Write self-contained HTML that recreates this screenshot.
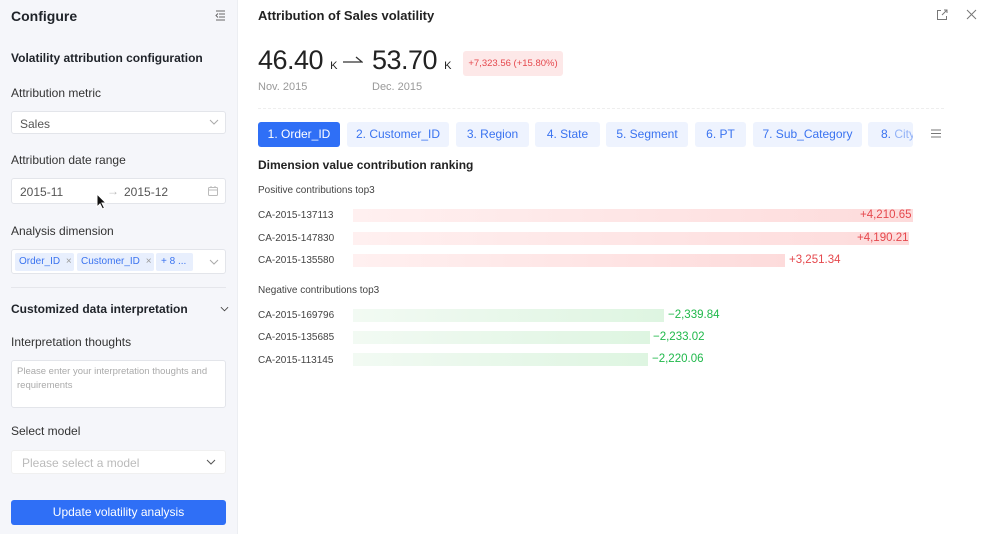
<!DOCTYPE html>
<html><head><meta charset="utf-8"><style>
*{box-sizing:border-box;margin:0;padding:0}
body{width:986px;height:534px;overflow:hidden;font-family:"Liberation Sans",Arial,sans-serif;background:#fff;position:relative;color:#1f2329}
.abs{position:absolute}
.side{left:0;top:0;width:238px;height:534px;background:#f5f6fa;border-right:1px solid #eceef2}
.lbl{font-size:12px;color:#333;position:absolute;left:11px}
.inp{position:absolute;left:11px;width:215px;background:#fff;border:1px solid #e3e5ea;border-radius:3px;font-size:12px;color:#555}
.tab{position:absolute;top:122px;height:25px;background:#eef3fe;color:#3a73f0;font-size:12px;border-radius:3px;text-align:center;line-height:25px;white-space:nowrap}
.row{position:absolute;left:258px;font-size:10px;color:#444}
.bar{position:absolute;left:353px;height:13px}
.pos{background:linear-gradient(90deg,#fff0f0,#fddbdb)}
.neg{background:linear-gradient(90deg,#f2faf3,#def5e1)}
.val{position:absolute;font-size:11.5px}
.chev{position:absolute}
</style></head><body>
<div class="abs side"></div>
<div class="abs" style="left:11px;top:8px;font-size:14px;font-weight:bold">Configure</div>
<svg class="abs" style="left:214px;top:9px" width="12" height="12" viewBox="0 0 12 12" fill="none" stroke="#666" stroke-width="1"><path d="M2 2h9M5 5h6M5 8h6M2 11h9M4 4.5L2 6.5 4 8.5"/></svg>
<div class="abs" style="left:11px;top:51px;font-size:12px;font-weight:bold">Volatility attribution configuration</div>
<div class="lbl" style="top:86px">Attribution metric</div>
<div class="inp" style="top:111px;height:23px;padding:5px 8px">Sales<svg class="chev" style="right:6px;top:7px" width="10" height="6" viewBox="0 0 10 6" fill="none" stroke="#aaa"><path d="M1 1l4 4 4-4"/></svg></div>
<div class="lbl" style="top:153px">Attribution date range</div>
<div class="inp" style="top:178px;height:26px;padding:6px 8px">2015-11<span class="abs" style="left:95px;top:5px;color:#bbb">→</span><span class="abs" style="left:112px;top:6px">2015-12</span><svg class="chev" style="right:7px;top:7px" width="10" height="10" viewBox="0 0 10 10" fill="none" stroke="#bbb"><rect x="0.5" y="1.5" width="9" height="8" rx="1"/><path d="M0.5 4h9M3 0v2M7 0v2"/></svg></div>
<svg class="abs" style="left:96px;top:193px" width="12" height="18" viewBox="0 0 12 18"><path d="M1 1v13l3-3 2.5 5 2-1-2.5-5h4z" fill="#111" stroke="#fff" stroke-width="1"/></svg>
<div class="lbl" style="top:224px">Analysis dimension</div>
<div class="inp" style="top:249px;height:25px">
<span class="abs" style="left:3px;top:3px;height:18px;width:59px;background:#e8effd;color:#3a73f0;font-size:10px;line-height:18px;padding-left:4px;border-radius:2px">Order_ID <span style="color:#999;margin-left:3px">×</span></span>
<span class="abs" style="left:65px;top:3px;height:18px;width:77px;background:#e8effd;color:#3a73f0;font-size:10px;line-height:18px;padding-left:4px;border-radius:2px">Customer_ID <span style="color:#999;margin-left:3px">×</span></span>
<span class="abs" style="left:144px;top:3px;height:18px;width:37px;background:#e8effd;color:#3a73f0;font-size:10px;line-height:18px;padding-left:5px;border-radius:2px">+ 8 ...</span>
<svg class="chev" style="right:6px;top:9px" width="10" height="6" viewBox="0 0 10 6" fill="none" stroke="#aaa"><path d="M1 1l4 4 4-4"/></svg></div>
<div class="abs" style="left:11px;top:287px;width:215px;border-top:1px solid #e5e6eb"></div>
<div class="abs" style="left:11px;top:302px;font-size:12px;font-weight:bold">Customized data interpretation</div>
<svg class="abs" style="left:220px;top:306px" width="9" height="6" viewBox="0 0 10 6" fill="none" stroke="#444"><path d="M1 1l4 4 4-4"/></svg>
<div class="lbl" style="top:335px">Interpretation thoughts</div>
<div class="inp" style="top:360px;height:48px;padding:4px 5px;font-size:9.5px;color:#aaa;line-height:14px">Please enter your interpretation thoughts and requirements</div>
<div class="lbl" style="top:424px">Select model</div>
<div class="inp" style="top:450px;height:24px;padding:5px 10px;color:#bbb;border-color:#f0f0f0">Please select a model<svg class="chev" style="right:9px;top:8px" width="10" height="6" viewBox="0 0 10 6" fill="none" stroke="#555"><path d="M1 1l4 4 4-4"/></svg></div>
<div class="abs" style="left:11px;top:500px;width:215px;height:25px;background:#2f6ff6;border-radius:3px;color:#fff;font-size:12px;text-align:center;line-height:25px">Update volatility analysis</div>

<div class="abs" style="left:258px;top:8px;font-size:13px;font-weight:bold;color:#222">Attribution of Sales volatility</div>
<svg class="abs" style="left:936px;top:9px" width="12" height="12" viewBox="0 0 12 12" fill="none" stroke="#777" stroke-width="1"><path d="M5 1.5H1.5v9h9V7M6 6l5-5M8 1h3v3"/></svg>
<svg class="abs" style="left:966px;top:9px" width="11" height="11" viewBox="0 0 11 11" stroke="#777" stroke-width="1"><path d="M1 1l9 9M10 1l-9 9"/></svg>
<div class="abs" style="left:258px;top:45px;font-size:27px;color:#222;letter-spacing:-0.5px">46.40<span style="font-size:11px;margin-left:7px">K</span></div>
<svg class="abs" style="left:343px;top:56px" width="20" height="8" viewBox="0 0 20 8" fill="none" stroke="#333" stroke-width="1.3"><path d="M0 6h19L13 1"/></svg>
<div class="abs" style="left:372px;top:45px;font-size:27px;color:#222;letter-spacing:-0.5px">53.70<span style="font-size:11px;margin-left:7px">K</span></div>
<div class="abs" style="left:258px;top:81px;font-size:11px;color:#999">Nov. 2015</div>
<div class="abs" style="left:372px;top:81px;font-size:11px;color:#999">Dec. 2015</div>
<div class="abs" style="left:463px;top:51px;width:100px;height:25px;background:#fde8e8;border-radius:3px;color:#e5484d;font-size:9.5px;text-align:center;line-height:25px">+7,323.56 (+15.80%)</div>
<div class="abs" style="left:258px;top:108px;width:686px;border-top:1px dashed #eee"></div>
<div class="tab" style="left:258px;width:82px;background:#2f6ff6;color:#fff">1. Order_ID</div>
<div class="tab" style="left:347px;width:102px">2. Customer_ID</div>
<div class="tab" style="left:456px;width:73px">3. Region</div>
<div class="tab" style="left:535px;width:65px">4. State</div>
<div class="tab" style="left:606px;width:82px">5. Segment</div>
<div class="tab" style="left:695px;width:51px">6. PT</div>
<div class="tab" style="left:753px;width:109px">7. Sub_Category</div>
<div class="tab" style="left:868px;width:45px;text-align:left;padding-left:13px;overflow:hidden">8. <span style="opacity:.5">City</span></div>
<svg class="abs" style="left:931px;top:129px" width="10" height="9" viewBox="0 0 10 9" stroke="#777"><path d="M0 1h10M0 4.5h10M0 8h10"/></svg>
<div class="abs" style="left:258px;top:158px;font-size:12px;font-weight:bold;color:#222">Dimension value contribution ranking</div>
<div class="abs" style="left:258px;top:185px;font-size:10px;color:#444">Positive contributions top3</div>
<div class="row" style="top:210px">CA-2015-137113</div><div class="bar pos" style="top:209px;width:560px"></div><div class="val" style="top:209px;left:860px;color:#e5484d">+4,210.65</div>
<div class="row" style="top:233px">CA-2015-147830</div><div class="bar pos" style="top:232px;width:556px"></div><div class="val" style="top:232px;left:857px;color:#e5484d">+4,190.21</div>
<div class="row" style="top:255px">CA-2015-135580</div><div class="bar pos" style="top:254px;width:432px"></div><div class="val" style="top:254px;left:789px;color:#e5484d">+3,251.34</div>
<div class="abs" style="left:258px;top:285px;font-size:10px;color:#444">Negative contributions top3</div>
<div class="row" style="top:310px">CA-2015-169796</div><div class="bar neg" style="top:309px;width:311px"></div><div class="val" style="top:309px;left:668px;color:#1fb84a">−2,339.84</div>
<div class="row" style="top:332px">CA-2015-135685</div><div class="bar neg" style="top:331px;width:297px"></div><div class="val" style="top:331px;left:653px;color:#1fb84a">−2,233.02</div>
<div class="row" style="top:355px">CA-2015-113145</div><div class="bar neg" style="top:353px;width:295px"></div><div class="val" style="top:353px;left:652px;color:#1fb84a">−2,220.06</div>
</body></html>
